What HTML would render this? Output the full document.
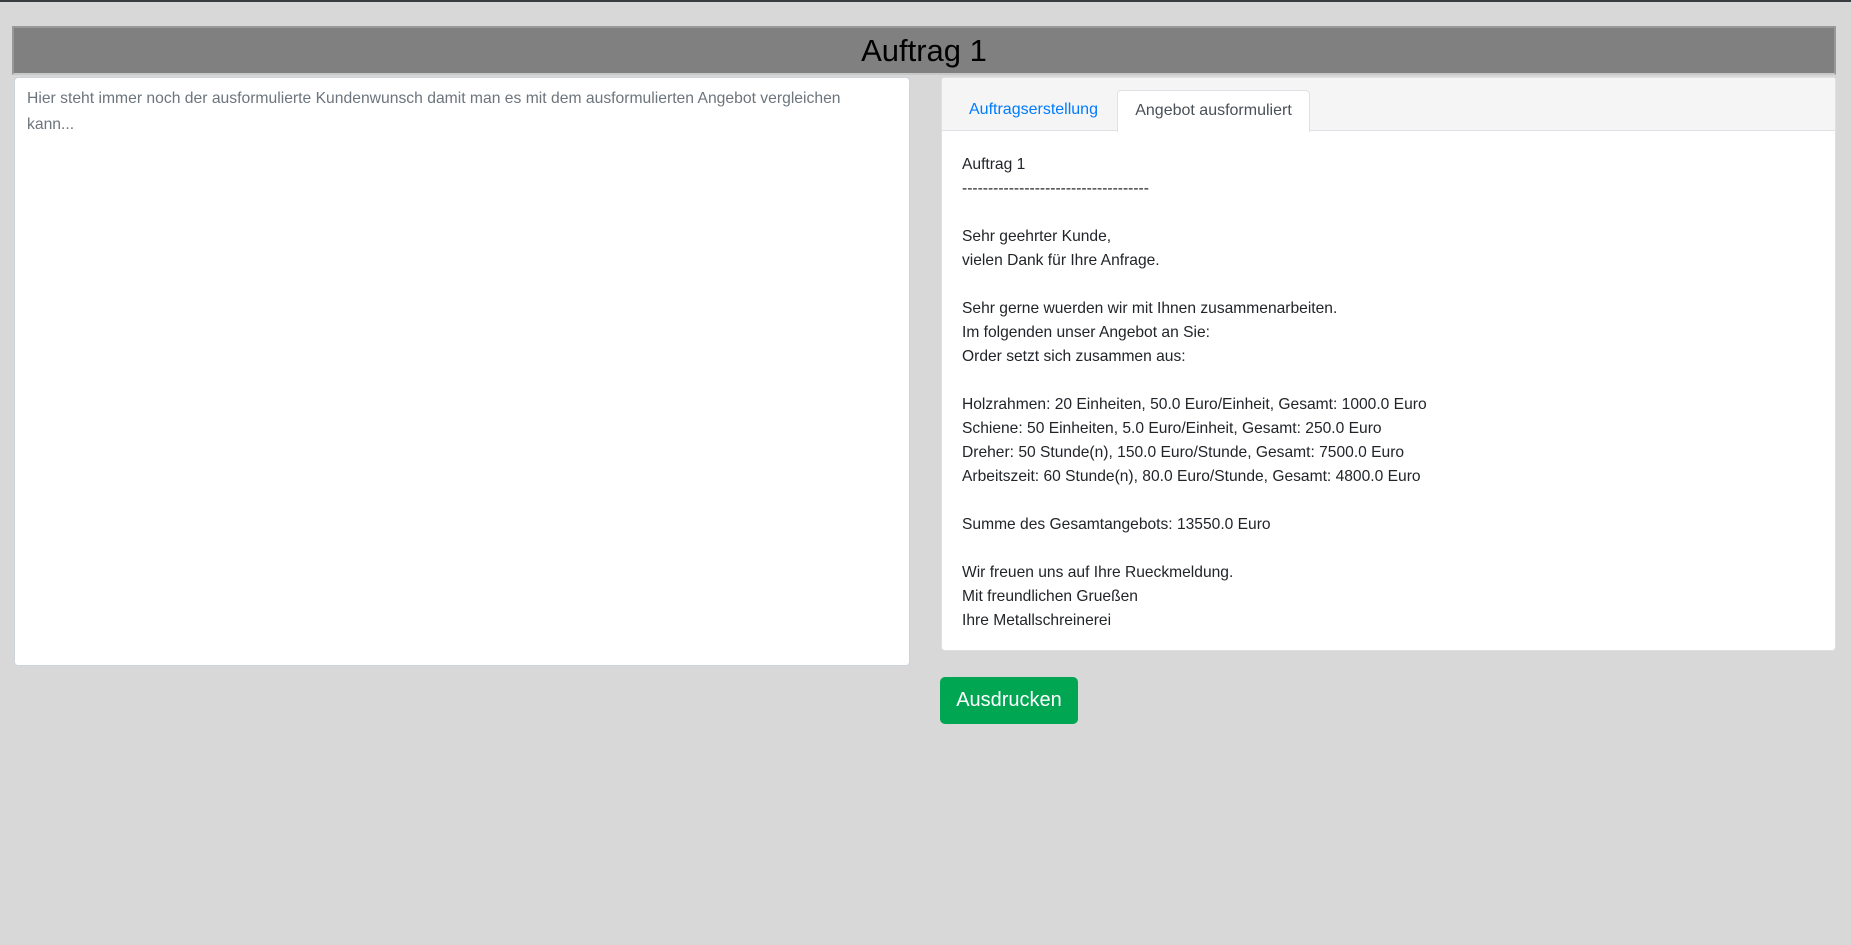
<!DOCTYPE html>
<html><head><meta charset="utf-8"><style>
*{box-sizing:border-box;margin:0;padding:0}
body{width:1851px;height:945px;background:#d8d8d8;font-family:"Liberation Sans",Arial,sans-serif;position:relative;overflow:hidden;color:#212529}
.top{position:absolute;left:0;top:0;width:1851px;height:2px;background:#3a3d40}
.hdr{position:absolute;left:12px;top:26px;width:1824px;height:49px;background:#808080;border:2px solid #999;border-bottom:2px solid #c8c8c8;text-align:center;font-size:31px;line-height:45px;color:#000}
.ta{position:absolute;left:14px;top:77px;width:896px;height:589px;background:#fff;border:1px solid #ced4da;border-radius:4px;padding:8px 40px 8px 12px;font-size:15.7px;line-height:26px;color:#6c757d}
.panel{position:absolute;left:941px;top:77px;width:895px;height:574px;background:#fff;border-radius:4px;border:1px solid #e0e0e0}
.tabs{height:53px;background:#f5f5f5;border-bottom:1px solid #dee2e6;position:relative}
.t1{position:absolute;left:27px;top:23px;color:#007bff;font-size:16px}
.t2{position:absolute;left:175px;top:12px;width:193px;height:42px;background:#fff;border:1px solid #dee2e6;border-bottom:none;border-radius:4px 4px 0 0;text-align:center;line-height:40px;font-size:16px;color:#495057}
.body{padding:22px 20px;font-size:15.6px;line-height:24px}
.btn{position:absolute;left:940px;top:677px;width:138px;height:47px;background:#00a651;border-radius:5px;color:#fff;font-size:20px;line-height:47px;text-align:center}
</style></head><body>
<div class="top"></div>
<div class="hdr">Auftrag 1</div>
<div class="ta">Hier steht immer noch der ausformulierte Kundenwunsch damit man es mit dem ausformulierten Angebot vergleichen kann...</div>
<div class="panel">
<div class="tabs"><span class="t1">Auftragserstellung</span><div class="t2">Angebot ausformuliert</div></div>
<div class="body">Auftrag 1<br>------------------------------------<br><br>Sehr geehrter Kunde,<br>vielen Dank für Ihre Anfrage.<br><br>Sehr gerne wuerden wir mit Ihnen zusammenarbeiten.<br>Im folgenden unser Angebot an Sie:<br>Order setzt sich zusammen aus:<br><br>Holzrahmen: 20 Einheiten, 50.0 Euro/Einheit, Gesamt: 1000.0 Euro<br>Schiene: 50 Einheiten, 5.0 Euro/Einheit, Gesamt: 250.0 Euro<br>Dreher: 50 Stunde(n), 150.0 Euro/Stunde, Gesamt: 7500.0 Euro<br>Arbeitszeit: 60 Stunde(n), 80.0 Euro/Stunde, Gesamt: 4800.0 Euro<br><br>Summe des Gesamtangebots: 13550.0 Euro<br><br>Wir freuen uns auf Ihre Rueckmeldung.<br>Mit freundlichen Grueßen<br>Ihre Metallschreinerei</div>
</div>
<div class="btn">Ausdrucken</div>
</body></html>
